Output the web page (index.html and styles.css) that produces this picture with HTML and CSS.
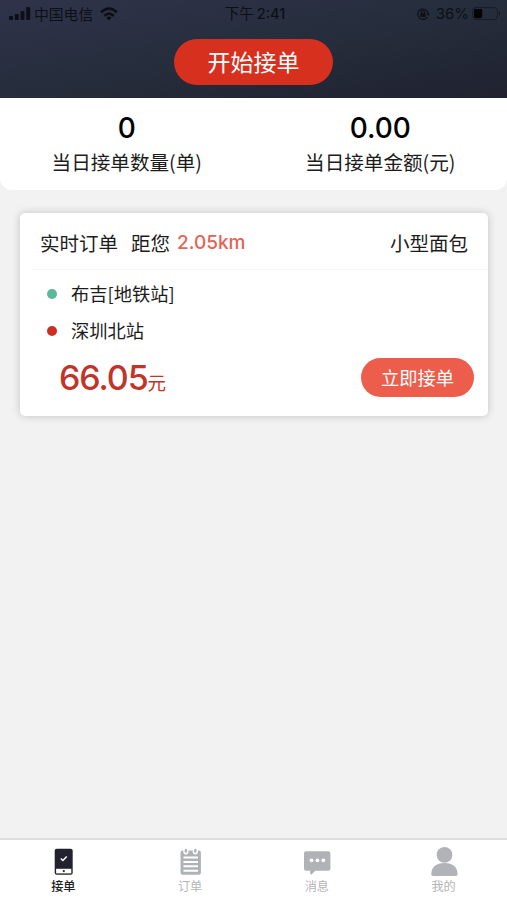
FILE: index.html
```html
<!DOCTYPE html>
<html lang="zh-CN">
<head>
<meta charset="utf-8">
<title>接单</title>
<link rel="stylesheet" href="styles.css">
</head>
<body>
<div class="app">
  <header class="header">
    <div class="status">
      <div class="status-left">
        <svg class="signal" viewBox="0 0 22 14"><rect x="0" y="9" width="4" height="4" rx="1"/><rect x="5.8" y="7" width="4" height="6" rx="1"/><rect x="11.5" y="4" width="4" height="9" rx="1"/><rect x="17.2" y="0" width="4" height="13" rx="1"/></svg>
        <span class="carrier">中国电信</span>
        <svg class="wifi" viewBox="0 0 18 14"><g fill="none" stroke="#0c0f18" stroke-width="2.6"><path d="M1 5.4Q9-2.2 17 5.4"/><path d="M4.2 8.8Q9 4.4 13.8 8.8"/></g><path d="M6.2 10.4Q9 8.4 11.8 10.4L9 13.4Z"/></svg>
      </div>
      <div class="status-time">下午<b>2:41</b></div>
      <div class="status-right">
        <svg class="lock" viewBox="0 0 14 14"><g fill="none" stroke="#0c0f18" stroke-width="1.2"><path d="M11.4 10A5.2 5.2 0 1 1 12.2 7"/><path d="M5.4 6.4V5.5a1.6 1.6 0 0 1 3.2 0v.9"/></g><rect x="4.3" y="6.2" width="5.4" height="3.8" rx=".7"/><path d="M10.4 6.4h3.4L12.2 9Z"/></svg>
        <span class="percent">36%</span>
        <svg class="battery" viewBox="0 0 29 14"><rect x=".6" y=".6" width="24.8" height="12" rx="3.4" fill="none" stroke="#171c29" stroke-width="1"/><rect x="2" y="2" width="8.2" height="9.2" rx="1.4" fill="#030406"/><path d="M27 4.6q2 2 0 4Z"/></svg>
      </div>
    </div>
    <button class="start">开始接单</button>
  </header>

  <section class="stats">
    <div class="stat"><strong>0</strong><span>当日接单数量(单)</span></div>
    <div class="stat"><strong>0.00</strong><span>当日接单金额(元)</span></div>
  </section>

  <main class="main">
    <article class="card">
      <div class="card-head">
        <span>实时订单</span>
        <span class="away">距您</span>
        <span class="distance">2.05km</span>
        <span class="vehicle">小型面包</span>
      </div>
      <div class="stop"><i class="dot from"></i><span>布吉[地铁站]</span></div>
      <div class="stop"><i class="dot to"></i><span>深圳北站</span></div>
      <div class="card-foot">
        <div class="price">66.05<small>元</small></div>
        <button class="accept">立即接单</button>
      </div>
    </article>
  </main>

  <nav class="tabs">
    <a class="tab active">
      <svg viewBox="0 0 32 32"><rect x="7.700" y="2.800" width="18" height="26" rx="2" fill="#22212f"/><rect x="9.100" y="22.800" width="15.200" height="4.600" fill="#fff"/><circle cx="16.800" cy="25.100" r="1.100" fill="#22212f"/><path d="M13.800 12.500l2.100 2 3.800-3.900" fill="none" stroke="#fff" stroke-width="1.500"/></svg>
      <span>接单</span>
    </a>
    <a class="tab">
      <svg viewBox="0 0 32 32" fill="#b0b3b6"><path d="M6.500 6.500q0-2 2-2h.8v1.300a2.600 2.600 0 0 0 5.200 0V4.500h4.200v1.300a2.600 2.600 0 0 0 5.200 0V4.500h1q2 0 2 2v20.300q0 2-2 2H8.500q-2 0-2-2Z"/><rect x="10.700" y="2.800" width="2.400" height="4" rx="1.200"/><rect x="20.100" y="2.800" width="2.400" height="4" rx="1.200"/><path d="M9.500 11.500h14.500M9.500 15.900h14.500M9.500 20.300h14.500M9.500 24.700h14.500" stroke="#fff" stroke-width="2"/></svg>
      <span>订单</span>
    </a>
    <a class="tab">
      <svg viewBox="0 0 32 32"><path d="M5 5.200h22.400q2 0 2 2v15.600q0 2-2 2H14.200l-3.700 3.600q-1.300 0-1.300-1v-2.600H5q-2 0-2-2V7.200q0-2 2-2Z" fill="#b1b2b6"/><g fill="#fff"><circle cx="10.500" cy="14.300" r="1.900"/><circle cx="16.400" cy="14.300" r="1.900"/><circle cx="22.300" cy="14.300" r="1.900"/></g></svg>
      <span>消息</span>
    </a>
    <a class="tab">
      <svg viewBox="0 0 32 32" fill="#b2b2b9"><circle cx="16.500" cy="8.800" r="7.900"/><path d="M3.300 28.300C3.300 21 8 17 16.500 17s13 4 13 11.300q0 1.700-1.700 1.700H5q-1.700 0-1.700-1.700Z"/></svg>
      <span>我的</span>
    </a>
  </nav>
</div>
</body>
</html>
```
FILE: styles.css
```css
* { box-sizing: border-box; }
body {
  margin: 0;
  background: #f2f2f2;
  color: #1c1c1c;
  font-family: "Noto Sans CJK SC", sans-serif;
}
button {
  border: 0;
  padding: 0;
  font-family: inherit;
  color: #fff;
}
.app {
  height: 900px;
  display: flex;
  flex-direction: column;
}
.header {
  height: 98px;
  background: linear-gradient(170deg, #30334a 0%, #262e3d 45%, #20222f 100%);
  display: flex;
  flex-direction: column;
  align-items: center;
}
.status {
  width: 100%;
  height: 27px;
  margin-bottom: 12px;
  padding: 0 6px 0 9px;
  display: grid;
  grid-template-columns: 1fr auto 1fr;
  align-items: center;
  color: #0c0f18;
  font-size: 14.800px;
  line-height: 26px;
  fill: #0c0f18;
}
.status-left, .status-right { display: flex; align-items: center; }
.status-right { justify-content: flex-end; }
.signal { width: 22px; height: 14px; }
.carrier { margin: 0 7px 0 3px; }
.wifi { width: 18px; height: 14px; }
.status-time { font-size: 14.500px; }
.status-time b, .percent { font-family: Inter, sans-serif; }
.status-time b { font-size: 14.500px; font-weight: 500; margin-left: 3px; }
.lock { width: 14px; height: 14px; margin-right: 6px; }
.percent { font-size: 15px; }
.battery { width: 29px; height: 14px; margin-left: 3px; }
.start {
  width: 159px;
  height: 46px;
  border-radius: 23px;
  background: #d8301f;
  font-size: 23px;
  line-height: 44px;
  padding-bottom: 2px;
}
.stats {
  height: 92px;
  background: #fff;
  display: flex;
  border-radius: 0 0 12px 12px;
}
.stat {
  flex: 1;
  display: flex;
  flex-direction: column;
  align-items: center;
  padding-top: 12px;
}
.stat strong {
  font: 500 28px/36px Inter, sans-serif;
  color: #000;
}
.stat span { font-size: 19.600px; line-height: 32px; }
.main { flex: 1; padding: 23px 19px 0 20px; }
.card {
  height: 203px;
  background: #fff;
  border-radius: 5px;
  box-shadow: 0 0 8px rgba(0, 0, 0, .2);
}
.card-head {
  height: 57px;
  margin-left: 11px;
  padding: 2px 20px 0 9px;
  border-bottom: 1px solid #f6f6f6;
  display: flex;
  align-items: center;
  font-size: 19.500px;
}
.away { margin-left: 13px; }
.distance {
  margin-left: 7px;
  padding-top: 1px;
  font: 500 19px/28px Inter, sans-serif;
  color: #e36454;
}
.vehicle { margin-left: auto; }
.stop {
  display: flex;
  align-items: center;
  height: 37px;
  padding-left: 27px;
  font-size: 18.300px;
}
.stop span { padding-bottom: 2px; }
.card-head + .stop { margin-top: 5px; }
.dot {
  width: 10px;
  height: 10px;
  margin-right: 14px;
  border-radius: 50%;
}
.from { background: #5cb898; }
.to { background: #cb3022; }
.card-foot {
  display: flex;
  justify-content: space-between;
  padding: 9px 14px 0 39px;
}
.price {
  font: 500 34px/40px Inter, sans-serif;
  letter-spacing: -1.100px;
  color: #c23328;
}
.price small {
  font: 400 18.500px/20px "Noto Sans CJK SC", sans-serif;
  letter-spacing: 0;
}
.accept {
  width: 113px;
  height: 39px;
  border-radius: 20px;
  background: #ec5e4b;
  font-size: 18.300px;
  line-height: 37px;
}
.tabs {
  height: 62px;
  border-top: 2px solid #dedede;
  background: #fff;
  display: flex;
}
.tab {
  flex: 1;
  display: flex;
  flex-direction: column;
  align-items: center;
  padding-top: 6px;
  color: #b5b5b8;
  font-size: 12.200px;
  line-height: 16px;
}
.tab svg { width: 32px; height: 32px; }
.tab.active { color: #222; font-weight: 500; }
```
